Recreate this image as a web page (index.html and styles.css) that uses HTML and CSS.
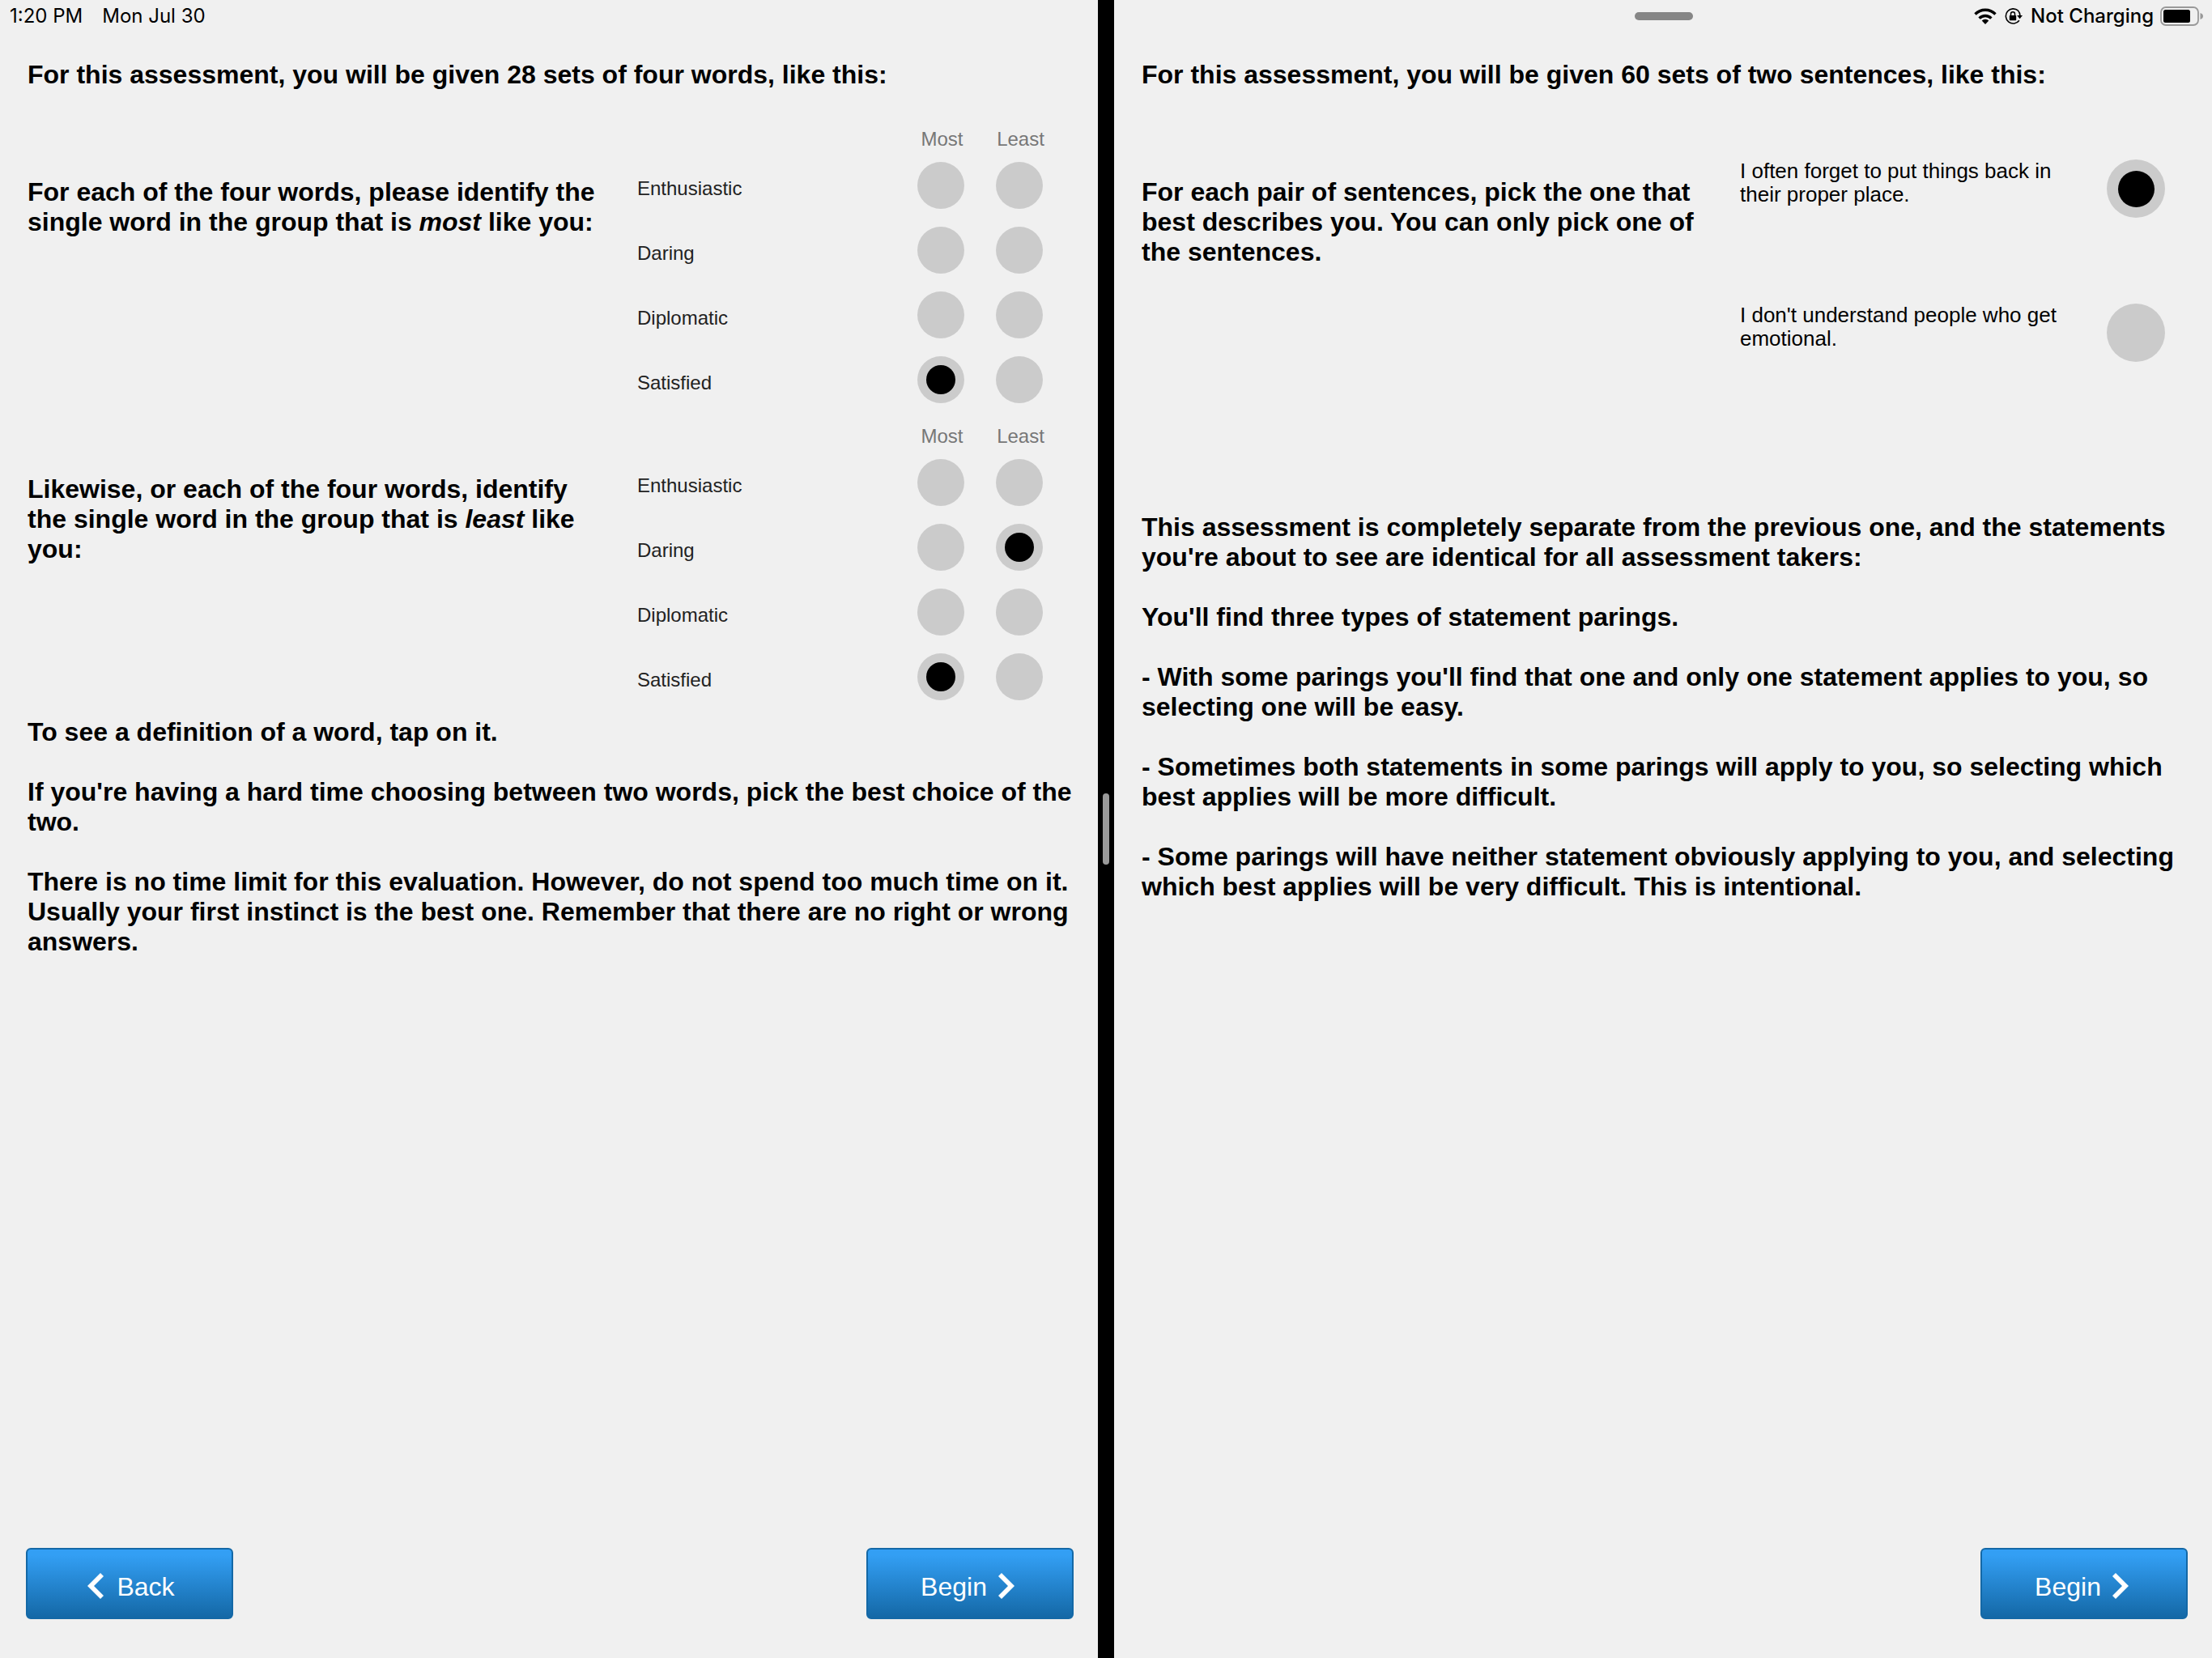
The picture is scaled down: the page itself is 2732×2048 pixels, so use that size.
FILE: index.html
```html
<!DOCTYPE html>
<html lang="en">
<head>
<meta charset="utf-8">
<meta name="viewport" content="width=device-width, initial-scale=1">
<title>Assessment instructions</title>
<link rel="stylesheet" href="styles.css">
</head>
<body class="split">
  <main class="pane">
    <header class="status">
      <div class="status-left"><span>1:20 PM</span><span>Mon Jul 30</span></div>
    </header>
    <section class="content">
      <p class="lead">For this assessment, you will be given 28 sets of four words, like this:</p>
      <div class="example example-words">
        <p class="instruction">For each of the four words, please identify the single word in the group that is <em>most</em> like you:</p>
        <table class="words">
          <thead>
            <tr><td></td><th scope="col">Most</th><th scope="col">Least</th></tr>
          </thead>
          <tbody>
            <tr><th scope="row">Enthusiastic</th><td><input class="radio" type="radio" name="a-most" aria-label="Enthusiastic, most"></td><td><input class="radio" type="radio" name="a-least" aria-label="Enthusiastic, least"></td></tr>
            <tr><th scope="row">Daring</th><td><input class="radio" type="radio" name="a-most" aria-label="Daring, most"></td><td><input class="radio" type="radio" name="a-least" aria-label="Daring, least"></td></tr>
            <tr><th scope="row">Diplomatic</th><td><input class="radio" type="radio" name="a-most" aria-label="Diplomatic, most"></td><td><input class="radio" type="radio" name="a-least" aria-label="Diplomatic, least"></td></tr>
            <tr><th scope="row">Satisfied</th><td><input class="radio" type="radio" name="a-most" aria-label="Satisfied, most" checked></td><td><input class="radio" type="radio" name="a-least" aria-label="Satisfied, least"></td></tr>
          </tbody>
        </table>
      </div>
      <div class="example example-words">
        <p class="instruction">Likewise, or each of the four words, identify the single word in the group that is <em>least</em> like you:</p>
        <table class="words">
          <thead>
            <tr><td></td><th scope="col">Most</th><th scope="col">Least</th></tr>
          </thead>
          <tbody>
            <tr><th scope="row">Enthusiastic</th><td><input class="radio" type="radio" name="b-most" aria-label="Enthusiastic, most"></td><td><input class="radio" type="radio" name="b-least" aria-label="Enthusiastic, least"></td></tr>
            <tr><th scope="row">Daring</th><td><input class="radio" type="radio" name="b-most" aria-label="Daring, most"></td><td><input class="radio" type="radio" name="b-least" aria-label="Daring, least" checked></td></tr>
            <tr><th scope="row">Diplomatic</th><td><input class="radio" type="radio" name="b-most" aria-label="Diplomatic, most"></td><td><input class="radio" type="radio" name="b-least" aria-label="Diplomatic, least"></td></tr>
            <tr><th scope="row">Satisfied</th><td><input class="radio" type="radio" name="b-most" aria-label="Satisfied, most" checked></td><td><input class="radio" type="radio" name="b-least" aria-label="Satisfied, least"></td></tr>
          </tbody>
        </table>
      </div>
      <div class="notes notes-words">
        <p>To see a definition of a word, tap on it.</p>
        <p>If you're having a hard time choosing between two words, pick the best choice of the two.</p>
        <p>There is no time limit for this evaluation. However, do not spend too much time on it. Usually your first instinct is the best one. Remember that there are no right or wrong answers.</p>
      </div>
    </section>
    <footer class="actions">
      <button class="button" type="button">
        <svg class="chevron" viewBox="0 0 28 32" aria-hidden="true"><path d="M20 0l4 4-12 12 12 12-4 4L4 16z"/></svg>
        Back
      </button>
      <button class="button button-next" type="button">
        Begin
        <svg class="chevron" viewBox="0 0 28 32" aria-hidden="true"><path d="M6 0L2 4l12 12L2 28l4 4 16-16z"/></svg>
      </button>
    </footer>
  </main>

  <div class="divider" role="separator" aria-orientation="vertical"><span class="divider-grip"></span></div>

  <section class="pane">
    <header class="status">
      <div class="status-left"></div>
      <span class="pill"></span>
      <div class="status-right">
        <svg class="icon-wifi" viewBox="0 0 28 20" aria-label="Wi-Fi" role="img">
          <path d="M14 20l-4.300-4.400a6.200 6.200 0 0 1 8.600 0z"/>
          <path d="M6.600 12.600a10.500 10.500 0 0 1 14.800 0" fill="none" stroke="#000" stroke-width="3.400"/>
          <path d="M1.500 7.500a17.600 17.600 0 0 1 25 0" fill="none" stroke="#000" stroke-width="3.400"/>
        </svg>
        <svg class="icon-lock" viewBox="0 0 22 20" aria-label="Rotation locked" role="img">
          <path d="M16.600 3.200a9.100 9.100 0 1 0 1.300 12M18.900 9.500a9.100 9.100 0 0 0-2.300-6.300" fill="none" stroke="#000" stroke-width="1.600"/>
          <path d="M15.200 9h6.800l-3.400 4.200z"/>
          <rect x="5.800" y="9" width="8.400" height="6.200" rx="0.800"/>
          <path d="M7.500 9V7.200a2.500 2.500 0 0 1 5 0V9" fill="none" stroke="#000" stroke-width="1.500"/>
        </svg>
        <span class="charging">Not Charging</span>
        <svg class="icon-battery" viewBox="0 0 54 24" aria-label="Battery" role="img">
          <rect x="1" y="1" width="46" height="22" rx="6" fill="none" stroke="#999" stroke-width="1.800"/>
          <rect x="4" y="4" width="33" height="16" rx="2.500"/>
          <path d="M49.500 8q3.500 1.200 3.500 4t-3.500 4z" fill="#999"/>
        </svg>
      </div>
    </header>
    <div class="content">
      <p class="lead">For this assessment, you will be given 60 sets of two sentences, like this:</p>
      <div class="example example-sentences">
        <p class="instruction">For each pair of sentences, pick the one that best describes you. You can only pick one of the sentences.</p>
        <div class="sentences">
          <label class="sentence"><span class="sentence-text">I often forget to put things back in their proper place.</span><input class="radio radio-large" type="radio" name="sentence" checked></label>
          <label class="sentence"><span class="sentence-text">I don't understand people who get emotional.</span><input class="radio radio-large" type="radio" name="sentence"></label>
        </div>
      </div>
      <div class="notes notes-sentences">
        <p>This assessment is completely separate from the previous one, and the statements you're about to see are identical for all assessment takers:</p>
        <p>You'll find three types of statement parings.</p>
        <p>- With some parings you'll find that one and only one statement applies to you, so selecting one will be easy.</p>
        <p>- Sometimes both statements in some parings will apply to you, so selecting which best applies will be more difficult.</p>
        <p>- Some parings will have neither statement obviously applying to you, and selecting which best applies will be very difficult. This is intentional.</p>
      </div>
    </div>
    <footer class="actions">
      <button class="button button-next" type="button">
        Begin
        <svg class="chevron" viewBox="0 0 28 32" aria-hidden="true"><path d="M6 0L2 4l12 12L2 28l4 4 16-16z"/></svg>
      </button>
    </footer>
  </section>
</body>
</html>
```
FILE: styles.css
```css
* {
  box-sizing: border-box;
}

body,
p {
  margin: 0;
}

.split {
  display: grid;
  grid-template-columns: minmax(0, 1fr) 20px minmax(0, 1fr);
  min-height: 100vh;
  background: #f0f0f0;
  color: #000;
  font-family: "Liberation Sans", Arial, sans-serif;
}

.pane {
  display: flex;
  flex-direction: column;
}

/* Split-view divider */
.divider {
  display: flex;
  align-items: center;
  justify-content: center;
  background: #000;
}

.divider-grip {
  width: 8px;
  height: 88px;
  border-radius: 4px;
  background: #999;
}

/* Status bar */
.status {
  display: grid;
  grid-template-columns: 1fr auto 1fr;
  align-items: center;
  height: 40px;
  padding: 0 10px 0 12px;
  font-family: Inter, "Noto Sans", sans-serif;
  font-size: 24px;
  line-height: 40px;
}

.status-left {
  display: flex;
  gap: 24px;
}

.status-right {
  display: flex;
  align-items: center;
  justify-content: flex-end;
}

.pill {
  width: 72px;
  height: 10px;
  border-radius: 5px;
  background: #868686;
}

.icon-wifi {
  width: 28px;
  height: 20px;
  margin-right: 10px;
}

.icon-lock {
  width: 22px;
  height: 20px;
  margin-right: 10px;
}

.charging {
  font-weight: 500;
}

.icon-battery {
  width: 54px;
  height: 24px;
  margin-left: 8px;
}

/* Instructions */
.content {
  padding: 34px 30px 34px 34px;
  font-size: 32px;
  font-weight: 700;
  line-height: 37px;
}

.lead {
  margin-bottom: 47px;
}

.example {
  display: grid;
  column-gap: 36px;
  align-items: start;
}

.example-words {
  grid-template-columns: minmax(0, 1fr) 520px;
  margin-bottom: 16px;
  padding-right: 19px;
}

.example-sentences {
  grid-template-columns: minmax(0, 1fr) 525px;
  padding-right: 28px;
}

.instruction {
  padding-top: 61px;
}

.notes {
  display: grid;
  gap: 37px;
}

.notes-words {
  margin-top: -6px;
}

.notes-sentences {
  margin-top: 186px;
}

/* Word table */
.words {
  width: 100%;
  border-collapse: collapse;
  table-layout: fixed;
  font-size: 24px;
  line-height: 28px;
}

.words th,
.words td {
  padding: 0;
  font-weight: 400;
}

.words thead tr {
  height: 31px;
}

.words thead th {
  width: 97px;
  padding-left: 4px;
  color: #777;
  text-align: center;
  vertical-align: top;
}

.words tbody tr {
  height: 80px;
}

.words tbody th {
  padding-top: 8px;
  color: #222;
  text-align: left;
}

.words tbody td {
  text-align: center;
}

/* Radio buttons */
.radio {
  display: inline-grid;
  flex: none;
  place-content: center;
  width: 58px;
  height: 58px;
  margin: 0;
  border-radius: 50%;
  background: #cbcbcb;
  appearance: none;
  vertical-align: middle;
}

.radio:checked::before {
  width: 36px;
  height: 36px;
  border-radius: 50%;
  background: #000;
  content: "";
}

.radio-large {
  width: 72px;
  height: 72px;
}

.radio-large:checked::before {
  width: 45px;
  height: 45px;
}

/* Sentence pair */
.sentences {
  display: grid;
  gap: 106px;
  padding-top: 39px;
}

.sentence {
  display: flex;
  align-items: flex-start;
  justify-content: space-between;
  font-size: 26px;
  font-weight: 400;
  line-height: 29px;
}

.sentence-text {
  max-width: 420px;
}

/* Footer buttons */
.actions {
  display: flex;
  justify-content: space-between;
  margin-top: auto;
  padding: 0 30px 48px 32px;
}

.button {
  display: flex;
  align-items: center;
  justify-content: center;
  gap: 12px;
  width: 256px;
  height: 88px;
  padding: 8px 0 0;
  border: 2px solid #1468a6;
  border-radius: 6px;
  background: linear-gradient(#339ff4 8%, #1468a6);
  color: #fff;
  font-family: inherit;
  font-size: 32px;
  line-height: 36px;
}

.button-next {
  margin-left: auto;
}

.chevron {
  width: 28px;
  height: 32px;
  margin-bottom: 2px;
  fill: #fff;
}
```
